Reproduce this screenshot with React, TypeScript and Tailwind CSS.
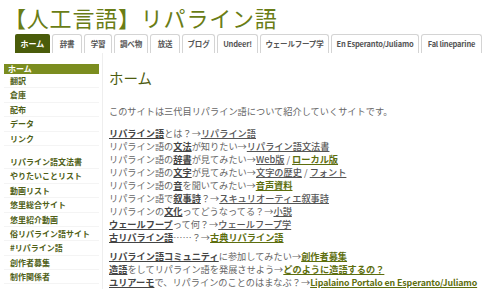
const tabs: [string, number][] = [
  ['ホーム', 35],
  ['辞書', 30],
  ['学習', 28],
  ['調べ物', 34],
  ['放送', 30],
  ['ブログ', 33],
  ['Undeer!', 41],
  ['ウェールフープ学', 69],
  ['En Esperanto/Juliamo', 88],
  ['Fal lineparine', 61],
]

const sideTop = ['翻訳', '倉庫', '配布', 'データ', 'リンク']
const sideBottom = [
  'リパライン語文法書',
  'やりたいことリスト',
  '動画リスト',
  '悠里総合サイト',
  '悠里紹介動画',
  '俗リパライン語サイト',
  '#リパライン語',
  '創作者募集',
  '制作関係者',
]

// d = dark bold link, o = olive link, a = plain link, t = text, l = latin olive link
type Seg = [string, 'd' | 'o' | 't' | 'a' | 'l']

const lines: Seg[][] = [
  [['リパライン語', 'd'], ['とは？→', 't'], ['リパライン語', 'a']],
  [['リパライン語の', 't'], ['文法', 'd'], ['が知りたい→', 't'], ['リパライン語文法書', 'a']],
  [['リパライン語の', 't'], ['辞書', 'd'], ['が見てみたい→', 't'], ['Web版', 'a'], [' / ', 't'], ['ローカル版', 'o']],
  [['リパライン語の', 't'], ['文字', 'd'], ['が見てみたい→', 't'], ['文字の歴史', 'a'], [' / ', 't'], ['フォント', 'a']],
  [['リパライン語の', 't'], ['音', 'd'], ['を聞いてみたい→', 't'], ['音声資料', 'o']],
  [['リパライン語で', 't'], ['叙事詩', 'd'], ['？→', 't'], ['スキュリオーティエ叙事詩', 'a']],
  [['リパラインの', 't'], ['文化', 'd'], ['ってどうなってる？→', 't'], ['小説', 'a']],
  [['ウェールフープ', 'd'], ['って何？→', 't'], ['ウェールフープ学', 'a']],
  [['古リパライン語', 'd'], ['……？→', 't'], ['古典リパライン語', 'o']],
]

const lines2: Seg[][] = [
  [['リパライン語コミュニティ', 'd'], ['に参加してみたい→', 't'], ['創作者募集', 'o']],
  [['造語', 'd'], ['をしてリパライン語を発展させよう→', 't'], ['どのように造語するの？', 'o']],
  [['ユリアーモ', 'd'], ['で、リパラインのことのはまなぶ？→', 't'], ['Lipalaino Portalo en Esperanto/Juliamo', 'l']],
]

function Line({ segs }: { segs: Seg[] }) {
  return (
    <div className="h-[13px] leading-[13px] whitespace-nowrap">
      {segs.map(([text, kind], i) => {
        if (kind === 't') return <span key={i}>{text}</span>
        if (kind === 'd')
          return (
            <span key={i} className="font-bold text-[#444] underline underline-offset-[1px]">
              {text}
            </span>
          )
        if (kind === 'a')
          return (
            <span key={i} className="font-medium text-[#555] underline underline-offset-[1px]">
              {text}
            </span>
          )
        if (kind === 'l')
          return (
            <span key={i} className="text-[8.8px] font-bold tracking-[-0.1px] text-[#5d6e0e] underline underline-offset-[1px]">
              {text}
            </span>
          )
        return (
          <span key={i} className="font-bold text-[#5d6e0e] underline underline-offset-[1px]">
            {text}
          </span>
        )
      })}
    </div>
  )
}

export default function App() {
  return (
    <div
      className="h-[290px] w-[490px] overflow-hidden bg-white"
      style={{ fontFamily: '"Noto Sans CJK JP", "Noto Sans", sans-serif' }}
    >
      <header className="px-[4px] pt-[1px]">
        <h1 className="h-[32px] text-[22px] leading-[32px] tracking-[0.8px] text-[#6a7d16] whitespace-nowrap">
          【人工言語】リパライン語
        </h1>
        <nav className="flex gap-[2px] pl-[11px] pt-[1px]">
          {tabs.map(([t, w], i) => (
            <div
              key={t}
              style={{ width: w }}
              className={
                i === 0
                  ? 'h-[19px] shrink-0 rounded-t-[2px] bg-[#4a5c0a] text-center text-[8px] font-bold leading-[19px] text-white whitespace-nowrap'
                  : 'h-[19px] shrink-0 rounded-t-[3px] border border-b-0 border-[#d4d4d4] bg-white text-center text-[7.5px] font-semibold leading-[18px] tracking-[-0.2px] text-[#555] whitespace-nowrap'
              }
            >
              {t}
            </div>
          ))}
        </nav>
      </header>

      <div className="flex">
        <aside className="w-[103px] shrink-0 border-r border-[#eeeeee] pl-[4px] pt-[11px] pr-[3px] text-[8px] font-bold text-[#4f5f17]">
          <div className="h-[10px] bg-[#7b8d1f] pl-[4px] leading-[10px] text-white">ホーム</div>
          {sideTop.map((s) => (
            <div key={s} className="h-[14.4px] border-b border-[#f4f4f4] pl-[6px] leading-[14px]">
              {s}
            </div>
          ))}
          <div className="h-[9px]" />
          {sideBottom.map((s) => (
            <div key={s} className="h-[14.4px] border-b border-[#f4f4f4] pl-[6px] leading-[14px]">
              {s}
            </div>
          ))}
        </aside>

        <main className="flex-1 pl-[6px] pt-[15px] text-[9.2px] text-[#666]">
          <h2 className="h-[20px] text-[14.5px] leading-[20px] text-[#4d5c10]">ホーム</h2>
          <p className="mt-[17px] h-[13px] leading-[13px]">
            このサイトは三代目リパライン語について紹介していくサイトです。
          </p>
          <div className="mt-[9px]">
            {lines.map((l, i) => (
              <Line key={i} segs={l} />
            ))}
          </div>
          <div className="mt-[6px]">
            {lines2.map((l, i) => (
              <Line key={i} segs={l} />
            ))}
          </div>
        </main>
      </div>
    </div>
  )
}
